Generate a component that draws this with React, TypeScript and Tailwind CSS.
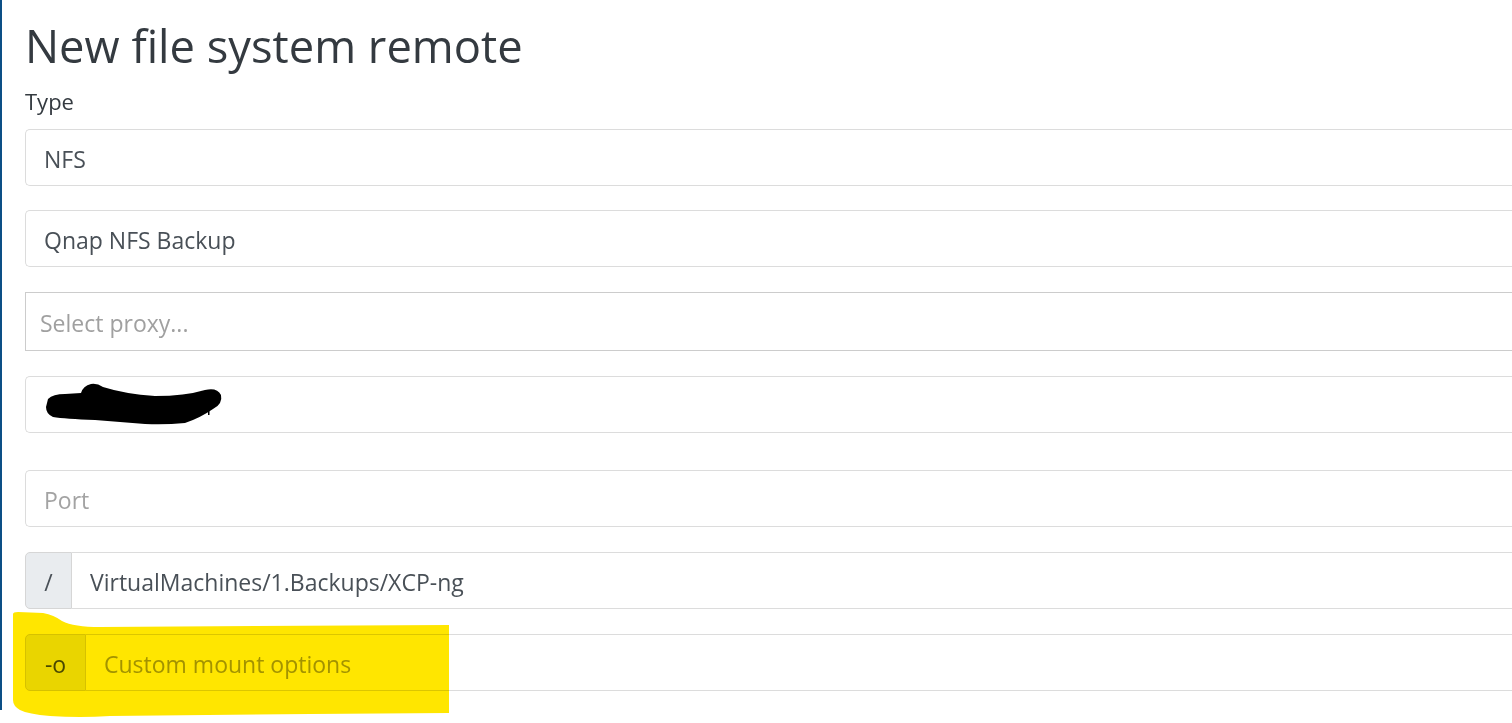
import React from "react";

const font = { fontFamily: '"Open Sans", "Noto Sans", sans-serif' };

function TextField({ value, placeholder }: { value?: string; placeholder?: string }) {
  return (
    <div className="flex h-[57px] items-center rounded-l-[5px] border border-r-0 border-[#dcdcdc] bg-white pl-[18px] pt-[4px] text-[23px]">
      {value ? (
        <span className="text-[#495057]">{value}</span>
      ) : (
        <span className="text-[#a3a3a3]">{placeholder}</span>
      )}
    </div>
  );
}

function AddonField({
  addon,
  addonWidth,
  value,
  placeholder,
}: {
  addon: string;
  addonWidth: string;
  value?: string;
  placeholder?: string;
}) {
  return (
    <div className="flex h-[57px] text-[23px]">
      <div
        className={`flex items-center justify-center rounded-l-[5px] border border-[#d6d6d6] bg-[#e9ecef] pt-[4px] text-[#495057] ${addonWidth}`}
      >
        {addon}
      </div>
      <div className="flex flex-1 items-center border-y border-[#dcdcdc] pl-[18px] pt-[4px]">
        {value ? (
          <span className="text-[#495057]">{value}</span>
        ) : (
          <span className="text-[#a3a3a3]">{placeholder}</span>
        )}
      </div>
    </div>
  );
}

// gribouillis noir qui cache l'hôte
function Redacted() {
  return (
    <svg className="absolute left-[20px] top-[6px]" width="182" height="46" viewBox="0 0 182 46">
      <path
        d="M3 17 Q8 12 20 12 L36 11 Q38 4 46 2 Q52 1 58 5 Q80 12 110 14 Q140 14 160 8 Q172 5 176 13 Q178 22 168 27 Q155 36 140 41 Q120 43 100 42 L50 38 Q20 37 8 35 Q1 32 1 25 Z"
        fill="#000"
      />
      <rect x="163" y="28" width="1.5" height="5" fill="#000" />
    </svg>
  );
}

function Highlighter() {
  return (
    <svg
      className="pointer-events-none absolute left-[10px] top-[608px] mix-blend-multiply"
      width="442"
      height="112"
      viewBox="0 0 442 112"
    >
      <path
        d="M3 6 Q3 4 8 4 L33 5 Q44 7 52 13 Q64 19 90 19 L439 17 L439 105 L300 106 L100 108 Q70 110 40 108 Q18 106 10 102 Q3 98 3 92 Z"
        fill="#ffe600"
      />
    </svg>
  );
}

export default function App() {
  return (
    <div className="relative h-[723px] w-full overflow-hidden bg-white" style={font}>
      <div className="h-[710px] border-l-[2px] border-[#0c4f86] pl-[23px] pt-[18px]">
        <h1 className="text-[45.3px] leading-[56px] font-normal text-[#343a40]">New file system remote</h1>
        <div className="mt-[13px] text-[22px] leading-[28px] text-[#343a40]">Type</div>
        <div className="mt-[14px] flex flex-col">
          <TextField value="NFS" />
          <div className="mt-[24px]">
            <TextField value="Qnap NFS Backup" />
          </div>
          <div className="mt-[25px] flex h-[59px] items-center border border-r-0 border-[#cccccc] pl-[14px] pt-[3px] text-[23px] text-[#a0a0a0]">
            Select proxy...
          </div>
          <div className="relative mt-[25px]">
            <TextField value=" " />
            <Redacted />
          </div>
          <div className="mt-[37px]">
            <TextField placeholder="Port" />
          </div>
          <div className="mt-[25px]">
            <AddonField addon="/" addonWidth="w-[47px]" value="VirtualMachines/1.Backups/XCP-ng" />
          </div>
          <div className="mt-[25px]">
            <AddonField addon="-o" addonWidth="w-[61px]" placeholder="Custom mount options" />
          </div>
        </div>
      </div>
      <Highlighter />
    </div>
  );
}
